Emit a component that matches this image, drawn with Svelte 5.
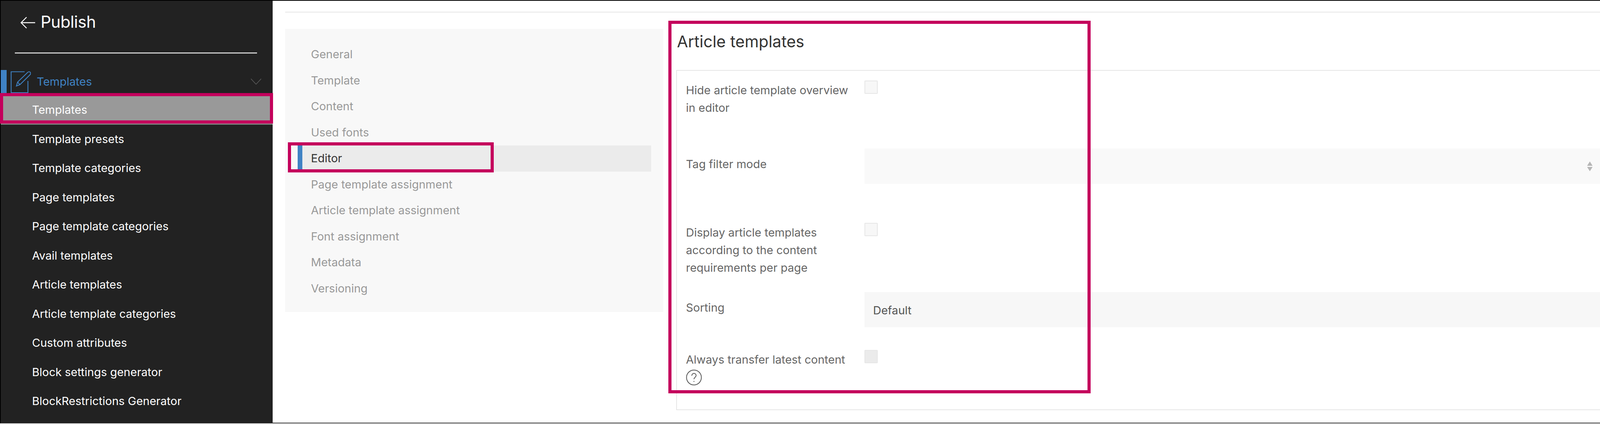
<script>
    const subnav = [
        "Templates",
        "Template presets",
        "Template categories",
        "Page templates",
        "Page template categories",
        "Avail templates",
        "Article templates",
        "Article template categories",
        "Custom attributes",
        "Block settings generator",
        "BlockRestrictions Generator"
    ];

    const tabs = [
        "General",
        "Template",
        "Content",
        "Used fonts",
        "Editor",
        "Page template assignment",
        "Article template assignment",
        "Font assignment",
        "Metadata",
        "Versioning"
    ];
</script>

<div class="frame">
    <aside class="sidebar">
        <div class="back">
            <svg class="back-arrow" viewBox="0 0 38 30" fill="none" stroke="#fff" stroke-width="2.4">
                <path d="M38 15H2M16 1 2 15l14 14" />
            </svg>
            <span>Publish</span>
        </div>
        <div class="divider"></div>
        <div class="group">
            <span class="group-bar"></span>
            <svg class="group-icon" viewBox="0 0 52 56" fill="none" stroke="#3f82c4" stroke-width="2.2">
                <path d="M36 1.5H1.5V55H44.500V25" />
                <path d="M15 38 18 28 44 3c2-2 5-2 6.500 0 1.500 1.500 1 4-.5 6L24 34.500Z" />
                <path d="M18 28 24 34.500" />
            </svg>
            <span class="group-label">Templates</span>
            <svg class="chevron" viewBox="0 0 27 15" fill="none" stroke="#5a5a5a" stroke-width="1.600">
                <path d="M.5.5 13.500 14.500 26.500.5" />
            </svg>
        </div>
        <ul class="subnav">
            {#each subnav as item, i}
                <li class:active={i === 0}>{item}</li>
            {/each}
        </ul>
    </aside>

    <main class="content">
        <div class="toprule"></div>
        <div class="columns">
            <nav class="tabs">
                {#each tabs as tab}
                    <div class="tab" class:current={tab === "Editor"}>{tab}</div>
                {/each}
            </nav>
            <section class="settings">
                <h2>Article templates</h2>
                <div class="panel">
                    <div class="row row-hide">
                        <div class="label">Hide article template overview in editor</div>
                        <span class="check"></span>
                    </div>
                    <div class="row row-tag">
                        <div class="label">Tag filter mode</div>
                        <div class="select short">
                            <svg class="updown" viewBox="0 0 14 25" fill="#b5b5b5">
                                <path d="M7 0 14 11H0ZM0 14H14L7 25Z" />
                            </svg>
                        </div>
                    </div>
                    <div class="row row-display">
                        <div class="label">Display article templates according to the content requirements per page</div>
                        <span class="check"></span>
                    </div>
                    <div class="row row-sort">
                        <div class="label">Sorting</div>
                        <div class="select wide">Default</div>
                    </div>
                    <div class="row row-always">
                        <div class="label">
                            Always transfer latest content
                            <svg class="help" viewBox="0 0 41 41" fill="none" stroke="#555" stroke-width="2">
                                <circle cx="20.500" cy="20.500" r="19" />
                                <path d="M15 16c0-3.500 2.500-6 5.500-6s5.500 2.300 5.500 5.500c0 4.500-5.500 4.500-5.500 9.500" />
                                <circle cx="20.500" cy="30.500" r="1.200" fill="#555" stroke="none" />
                            </svg>
                        </div>
                        <span class="check filled"></span>
                    </div>
                </div>
            </section>
        </div>
    </main>

    <!-- annotation boxes drawn on top of the screenshot -->
    <div class="mark mark-sub"></div>
    <div class="mark mark-tab"></div>
    <div class="mark mark-form"></div>
</div>

<style>
    :global(body) {
        margin: 0;
        background: #fff;
    }

    .frame {
        position: relative;
        display: flex;
        width: 4166px;
        height: 1083px;
        box-sizing: border-box;
        border: 2px solid #000;
        border-right-color: #222;
        border-bottom-color: #333;
        font-family: Inter, "Liberation Sans", sans-serif;
    }

    .sidebar {
        width: 696px;
        flex: none;
        background: #222;
        color: #fff;
    }

    .back {
        display: flex;
        align-items: center;
        gap: 14px;
        height: 84px;
        padding: 11px 0 0 50px;
        font-size: 42px;
        letter-spacing: -0.5px;
    }

    .back-arrow {
        width: 38px;
        height: 30px;
        margin-top: 6px;
    }

    .divider {
        height: 3px;
        margin: 37px 40px 0 36px;
        background: #ccc;
    }

    .group {
        display: flex;
        align-items: center;
        height: 59px;
        margin-top: 42px;
        color: #3f82c4;
        font-size: 29px;
    }

    .group-bar {
        width: 15px;
        height: 100%;
        background: #3f82c4;
    }

    .group-icon {
        width: 52px;
        height: 56px;
        margin: 3px 0 0 10px;
    }

    .group-label {
        margin-left: 15px;
    }

    .chevron {
        width: 27px;
        height: 15px;
        margin-left: auto;
        margin-right: 29px;
    }

    .subnav {
        margin: 0;
        padding: 6px 0 0;
        list-style: none;
    }

    .subnav li {
        height: 74.500px;
        padding-left: 80px;
        line-height: 74.500px;
        font-size: 29px;
    }

    .subnav li.active {
        background: #999;
        box-shadow: inset 0 -2px #777;
    }

    .content {
        flex: 1;
        min-width: 0;
        padding-left: 32px;
        background: #fff;
    }

    .toprule {
        height: 2px;
        margin-top: 28px;
        background: #e6e6e6;
    }

    .columns {
        display: flex;
        margin-top: 42px;
    }

    .tabs {
        width: 968px;
        height: 724px;
        flex: none;
        box-sizing: border-box;
        padding-top: 32px;
        background: #f8f8f8;
    }

    .tab {
        height: 66.500px;
        padding-left: 66px;
        line-height: 66.500px;
        color: #999;
        font-size: 29px;
    }

    .tab.current {
        position: relative;
        margin-right: 31px;
        background: #ebebeb;
        color: #333;
    }

    .tab.current::before {
        content: "";
        position: absolute;
        left: 0;
        top: 0;
        bottom: 0;
        width: 44px;
        background: #f8f8f8;
        border-right: 12px solid #3f82c4;
        box-sizing: border-box;
    }

    .settings {
        flex: 1;
        min-width: 0;
        padding-left: 33px;
    }

    h2 {
        margin: 0;
        padding-left: 2px;
        height: 105px;
        line-height: 64px;
        color: #333;
        font-size: 41px;
        font-weight: 400;
    }

    .panel {
        height: 870px;
        box-sizing: border-box;
        padding: 25px 0 0 23px;
        border: solid #e6e6e6;
        border-width: 2px 0 2px 2px;
    }

    .row {
        display: flex;
        align-items: flex-start;
    }

    .row-hide {
        margin-bottom: 82px;
    }

    .row-tag {
        margin-bottom: 100px;
    }

    .row-display {
        margin-bottom: 40px;
    }

    .row-sort {
        margin-bottom: 58px;
    }

    .label {
        width: 457px;
        flex: none;
        box-sizing: border-box;
        padding: 2px 30px 0 0;
        color: #666;
        font-size: 29px;
        line-height: 45px;
    }

    .row-tag .label,
    .row-sort .label {
        padding-top: 17px;
    }

    .check {
        width: 34px;
        height: 34px;
        box-sizing: border-box;
        border: 2px solid #e6e6e6;
        border-radius: 2px;
        background: #f7f7f7;
    }

    .check.filled {
        background: #ebebeb;
    }

    .select {
        flex: 1;
        height: 90px;
        box-sizing: border-box;
        background: #f9f9f9;
    }

    .select.short {
        display: flex;
        align-items: center;
        justify-content: flex-end;
        margin-right: 68px;
        padding-right: 19px;
    }

    .select.wide {
        padding-left: 22px;
        background: #f7f7f7;
        color: #555;
        font-size: 29px;
        line-height: 94px;
    }

    .updown {
        width: 14px;
        height: 25px;
    }

    .help {
        display: block;
        width: 41px;
        height: 41px;
        margin-top: 3px;
    }

    .mark {
        position: absolute;
        box-sizing: border-box;
        border: 8px solid #c4005c;
        pointer-events: none;
    }

    .mark-sub {
        left: -2px;
        top: 236px;
        width: 699px;
        height: 78px;
    }

    .mark-tab {
        left: 735px;
        top: 362px;
        width: 527px;
        height: 77px;
    }

    .mark-form {
        left: 1709px;
        top: 51px;
        width: 1081px;
        height: 953px;
    }
</style>
